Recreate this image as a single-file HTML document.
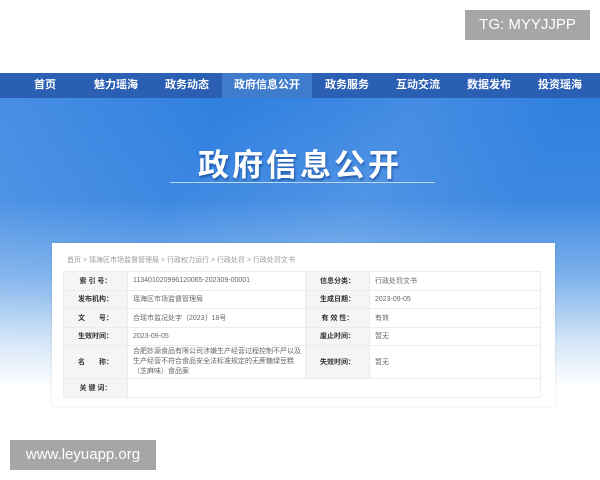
<!DOCTYPE html>
<html><head><meta charset="utf-8"><style>
*{margin:0;padding:0;box-sizing:border-box}
body{width:600px;height:480px;position:relative;background:#fff;font-family:"Liberation Sans","Noto Sans CJK SC",sans-serif;overflow:hidden}
.tg{position:absolute;left:465px;top:10px;width:125px;height:30px;background:#a6a6a6;color:#fff;font-size:15px;line-height:30px;text-align:center}
.nav{position:absolute;left:0;top:73px;width:600px;height:25px;background:#2b5fb3}
.nav div{position:absolute;top:0;width:80px;margin-left:-40px;color:#fff;font-size:11px;font-weight:bold;text-align:center;line-height:25px}
.nav .on{background:#3f7ccc;width:90px;margin-left:-45px}
.banner{position:absolute;left:0;top:98px;width:600px;height:290px;background:linear-gradient(180deg,#2f7fe0 0%,#3d88e2 35%,#7fb2ec 62%,#d8e8f8 85%,#fff 100%)}
.b1{position:absolute;left:0;top:0;width:600px;height:290px;background:linear-gradient(120deg,rgba(255,255,255,0.12) 0%,rgba(255,255,255,0) 30%,rgba(255,255,255,0.1) 55%,rgba(255,255,255,0) 75%)}
.title{position:absolute;left:0;top:140px;width:600px;text-align:center;color:#fff;font-size:31px;font-weight:bold;letter-spacing:3px;text-shadow:1px 2px 2px rgba(0,40,110,.5)}
.line{position:absolute;left:170px;top:182px;width:265px;height:1px;background:#bcd6f6}
.card{position:absolute;left:52px;top:243px;width:503px;height:163px;background:#fff;box-shadow:0 0 3px rgba(0,0,0,.1)}
.bc{position:absolute;left:15px;top:12px;font-size:7px;color:#999}
table{position:absolute;left:11px;top:28px;width:478px;border-collapse:collapse;font-size:7px}
td{border:1px solid #ececec;height:18.5px;color:#666;padding-left:5px}
td.l{background:#f5f5f5;color:#333;font-weight:bold;text-align:center;padding:0;width:64px}
td.l2{width:61px}
td.v{width:178px}
.ly{position:absolute;left:10px;top:440px;width:146px;height:30px;background:#a6a6a6;color:#fff;font-size:15px;line-height:30px;text-align:center}
</style></head><body>
<div class="tg">TG: MYYJJPP</div>
<div class="nav"><div style="left:45px">首页</div><div style="left:116px">魅力瑶海</div><div style="left:187px">政务动态</div><div class="on" style="left:267px">政府信息公开</div><div style="left:347px">政务服务</div><div style="left:418px">互动交流</div><div style="left:489px">数据发布</div><div style="left:560px">投资瑶海</div></div>
<div class="banner"><div class="b1"></div></div>
<div class="title">政府信息公开</div>
<div class="line"></div>
<div class="card">
<div class="bc">首页 &gt; 瑶海区市场监督管理局 &gt; 行政权力运行 &gt; 行政处罚 &gt; 行政处罚文书</div>
<table>
<tr><td class="l">索 引 号：</td><td class="v">113401020996120065-202309-00001</td><td class="l l2">信息分类：</td><td>行政处罚文书</td></tr>
<tr><td class="l">发布机构：</td><td>瑶海区市场监督管理局</td><td class="l">生成日期：</td><td>2023-09-05</td></tr>
<tr><td class="l">文　　号：</td><td>合瑶市监况处字〔2023〕18号</td><td class="l">有 效 性：</td><td>有效</td></tr>
<tr><td class="l">生效时间：</td><td>2023-09-05</td><td class="l">废止时间：</td><td>暂无</td></tr>
<tr><td class="l" style="height:33px">名　　称：</td><td style="line-height:10px">合肥妙源食品有限公司涉嫌生产经营过程控制不严以及生产经营不符合食品安全法标准规定的无蔗糖绿豆糕（芝麻味）食品案</td><td class="l">失效时间：</td><td>暂无</td></tr>
<tr><td class="l">关 键 词：</td><td colspan="3"></td></tr>
</table>
</div>
<div class="ly">www.leyuapp.org</div>
</body></html>
